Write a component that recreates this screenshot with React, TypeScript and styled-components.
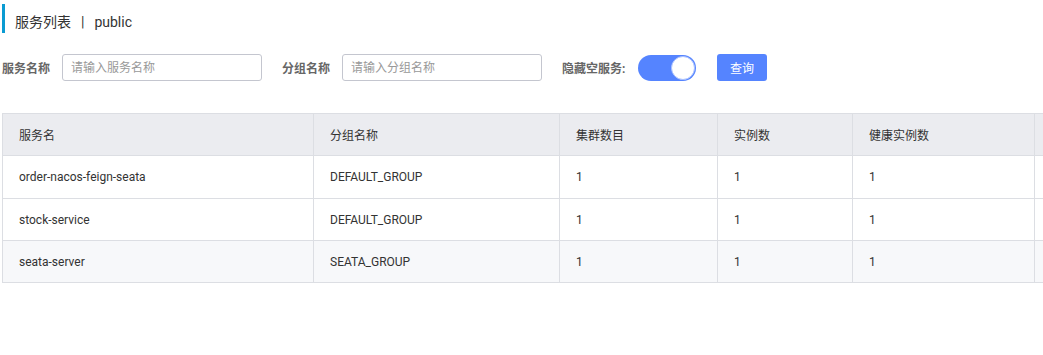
import styled, { createGlobalStyle } from "styled-components";

const GlobalStyle = createGlobalStyle`
  html, body {
    margin: 0;
    padding: 0;
    background: #fff;
    overflow: hidden;
  }
  body {
    font-family: Roboto, "Noto Sans CJK SC", sans-serif;
    color: #333;
  }
`;

const Page = styled.div`
  padding: 4px 0 0 2px;
  overflow: hidden;
`;

const Title = styled.h1`
  margin: 0;
  height: 29px;
  box-sizing: border-box;
  border-left: 3px solid #0a9bd2;
  padding: 8px 0 0 10px;
  font-size: 14px;
  line-height: 20px;
  font-weight: normal;
  color: #333;
  display: flex;
  gap: 10px;
`;

const Form = styled.div`
  display: flex;
  align-items: center;
  height: 27px;
  margin-top: 21px;
`;

const Field = styled.label`
  display: flex;
  align-items: center;
  margin-right: 20px;
`;

const Label = styled.span<{ $width: number }>`
  width: ${({ $width }) => $width}px;
  font-size: 12px;
  font-weight: bold;
  color: #666;
  white-space: nowrap;
`;

const Input = styled.input`
  width: 200px;
  height: 27px;
  box-sizing: border-box;
  border: 1px solid #c4c6cf;
  border-radius: 3px;
  padding: 0 8px;
  font-size: 12px;
  font-family: inherit;
  outline: none;
  &::placeholder {
    color: #999;
  }
`;

const Switch = styled.span`
  display: inline-flex;
  justify-content: flex-end;
  align-items: center;
  width: 58px;
  height: 26px;
  box-sizing: border-box;
  padding: 1px;
  border-radius: 13px;
  background: #5584ff;
`;

const Knob = styled.span`
  width: 24px;
  height: 24px;
  box-sizing: border-box;
  border-radius: 50%;
  background: #fff;
  border: 1px solid #a9c1ff;
`;

const Button = styled.button`
  height: 27px;
  width: 50px;
  border: none;
  border-radius: 3px;
  background: #5584ff;
  color: #fff;
  font-size: 12px;
  font-family: inherit;
  padding: 0;
  margin-left: 1px;
`;

const TableWrap = styled.div`
  margin-top: 32px;
  overflow: hidden;
`;

const Table = styled.table`
  border-collapse: collapse;
  table-layout: fixed;
  width: 1200px;
  font-size: 12px;
  color: #333;
`;

const Th = styled.th<{ $width: number }>`
  width: ${({ $width }) => $width}px;
  height: 42px;
  box-sizing: border-box;
  background: #ebecf0;
  border: 1px solid #dcdee3;
  text-align: left;
  font-weight: normal;
  padding: 0 16px;
`;

const Row = styled.tr<{ $alt?: boolean }>`
  background: ${({ $alt }) => ($alt ? "#f7f8fa" : "#fff")};
`;

const Td = styled.td<{ $h: number }>`
  height: ${({ $h }) => $h}px;
  box-sizing: border-box;
  border: 1px solid #dcdee3;
  padding: 0 16px;
  white-space: nowrap;
`;

// the last column continues past the right edge of the window
const columns = [
  { title: "服务名", width: 311 },
  { title: "分组名称", width: 246 },
  { title: "集群数目", width: 158 },
  { title: "实例数", width: 135 },
  { title: "健康实例数", width: 182 },
  { title: "", width: 168 },
];

const rows = [
  ["order-nacos-feign-seata", "DEFAULT_GROUP", "1", "1", "1", ""],
  ["stock-service", "DEFAULT_GROUP", "1", "1", "1", ""],
  ["seata-server", "SEATA_GROUP", "1", "1", "1", ""],
];

export default function App() {
  return (
    <Page>
      <GlobalStyle />
      <Title>
        <span>服务列表</span>
        <span>|</span>
        <span>public</span>
      </Title>
      <Form>
        <Field>
          <Label $width={60}>服务名称</Label>
          <Input placeholder="请输入服务名称" />
        </Field>
        <Field>
          <Label $width={60}>分组名称</Label>
          <Input placeholder="请输入分组名称" />
        </Field>
        <Field>
          <Label $width={76}>隐藏空服务:</Label>
          <Switch>
            <Knob />
          </Switch>
        </Field>
        <Button>查询</Button>
      </Form>
      <TableWrap>
        <Table>
          <thead>
            <tr>
              {columns.map((c, i) => (
                <Th key={i} $width={c.width}>
                  {c.title}
                </Th>
              ))}
            </tr>
          </thead>
          <tbody>
            {rows.map((r, i) => (
              <Row key={r[0]} $alt={i === 2}>
                {r.map((cell, j) => (
                  <Td key={j} $h={i === 0 ? 43 : 42}>
                    {cell}
                  </Td>
                ))}
              </Row>
            ))}
          </tbody>
        </Table>
      </TableWrap>
    </Page>
  );
}
